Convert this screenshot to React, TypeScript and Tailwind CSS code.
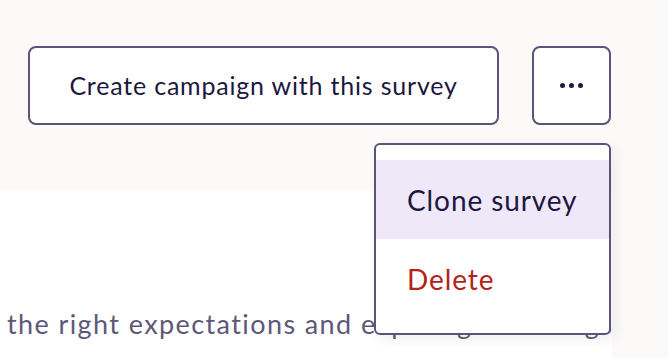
import { useState } from "react";

/* ---------------- COMPONENT ---------------- */
export default function App() {
  const [menuOpen, setMenuOpen] = useState(true);

  return (
    <div
      className="relative w-full h-[358px] overflow-hidden bg-[#fcfaf8]"
      style={{ fontFamily: "Lato, 'Noto Sans', sans-serif" }}
    >
      {/* ACTIONS */}
      <div className="flex justify-end gap-[33px] pt-[46px] pr-[57px]">
        <button className="w-[471px] h-[79px] rounded-lg border-2 border-[#5a5478] bg-white text-[25px] text-[#1c1741] tracking-[0.8px]">
          Create campaign with this survey
        </button>
        <button
          onClick={() => setMenuOpen((prev) => !prev)}
          className="w-[79px] h-[79px] rounded-lg border-2 border-[#5a5478] bg-white flex items-center justify-center gap-[4px]"
        >
          <span className="w-[5px] h-[5px] rounded-full bg-[#1c1741]" />
          <span className="w-[5px] h-[5px] rounded-full bg-[#1c1741]" />
          <span className="w-[5px] h-[5px] rounded-full bg-[#1c1741]" />
        </button>
      </div>

      {/* CONTENT */}
      <div className="mt-[65px] w-[612px] h-[200px] bg-white pt-[118px] pl-[7px]">
        <p className="text-[27px] leading-[32px] text-[#5d5879] tracking-[1.4px] whitespace-nowrap">
          the right expectations and expect great things
        </p>
      </div>

      {/* MENU */}
      {menuOpen && (
        <div className="absolute top-[143px] right-[57px] w-[237px] rounded-md border-2 border-[#5a5478] bg-white py-[15px] shadow-[4px_4px_12px_rgba(60,50,90,0.08)]">
          <div className="h-[79px] flex items-center pl-[31px] bg-[#efe8f8] text-[28px] text-[#1c1741] tracking-[0.9px]">
            Clone survey
          </div>
          <div className="h-[79px] flex items-center pl-[31px] text-[28px] text-[#b42318] tracking-[0.9px]">
            Delete
          </div>
        </div>
      )}
    </div>
  );
}
